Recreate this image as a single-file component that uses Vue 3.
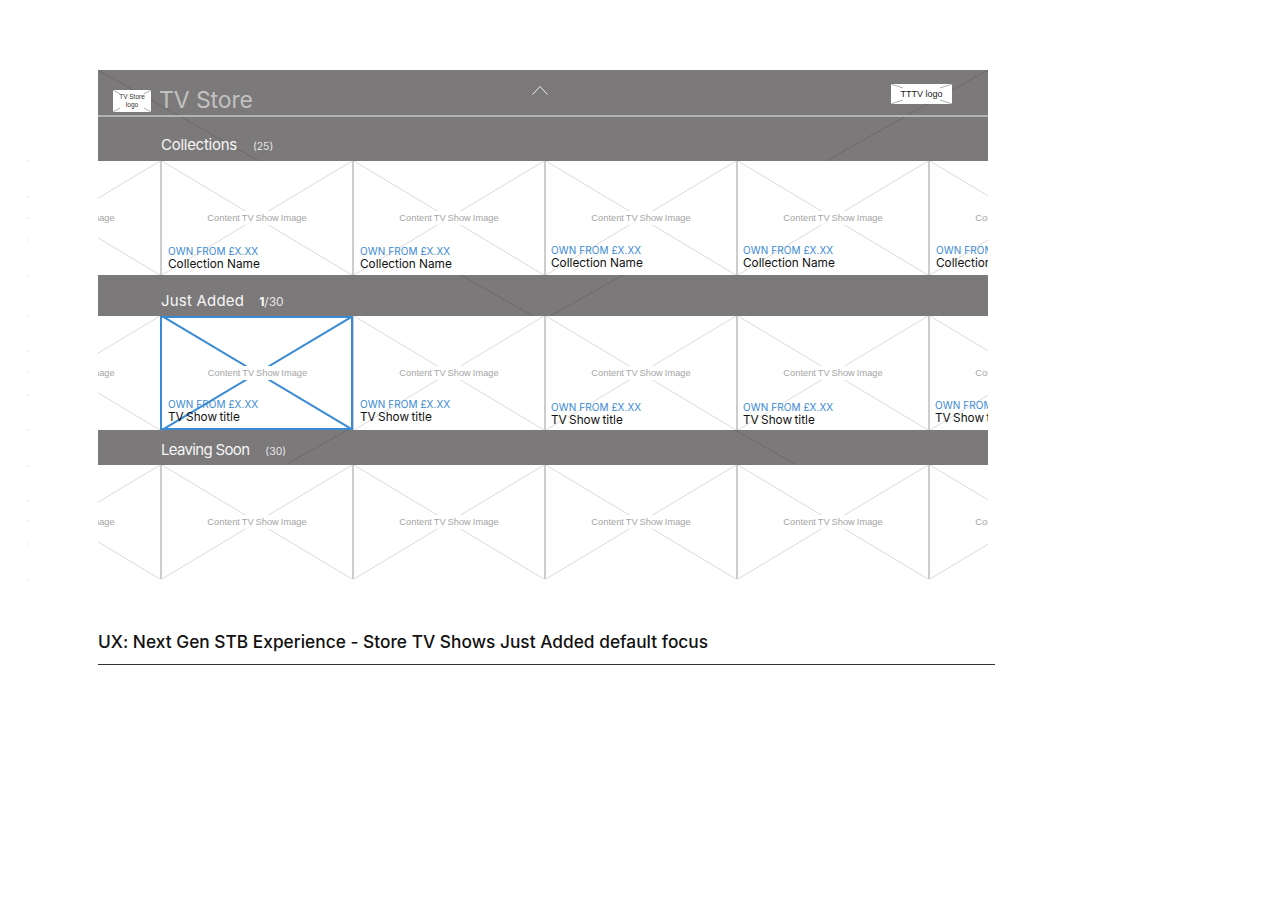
<script setup>
const sections = [
  {
    title: 'Collections',
    count: '(25)',
    bandClass: 'band-collections',
    name: 'Collection Name',
    cards: [{}, { x: 6, y: 5 }, { x: 6, y: 5 }, { x: 5, y: 6 }, { x: 5, y: 6 }, { x: 6, y: 6 }]
  },
  {
    title: 'Just Added',
    count: '/30',
    current: '1',
    bandClass: 'band-added',
    name: 'TV Show title',
    tight: true,
    cards: [{}, { x: 6, y: 7, focused: true }, { x: 6, y: 7 }, { x: 5, y: 4 }, { x: 5, y: 4 }, { x: 5, y: 6 }]
  },
  {
    title: 'Leaving Soon',
    count: '(30)',
    bandClass: 'band-leaving',
    cards: [{}, {}, {}, {}, {}, {}]
  }
]

// faint crop marks down the left edge of the sheet
const marks = [160, 196, 217, 239, 275, 315, 350, 371, 394, 429, 465, 500, 520, 543, 579]
</script>

<template>
  <div class="sheet">
    <span v-for="y in marks" :key="y" class="mark" :style="{ top: y + 'px' }"></span>

    <div class="frame">
      <svg class="frame-cross" viewBox="0 0 890 394" preserveAspectRatio="none">
        <line x1="0" y1="0" x2="697" y2="394" />
        <line x1="890" y1="0" x2="189" y2="394" />
      </svg>

      <header class="top-bar">
        <div class="store-logo">
          <svg class="corner-cross" viewBox="0 0 38 22" preserveAspectRatio="none">
            <path d="M0 0L7 4M38 0L31 4M0 22L7 18M38 22L31 18" />
          </svg>
          <span>TV Store<br />logo</span>
        </div>
        <h1>TV Store</h1>
        <svg class="chevron" viewBox="0 0 16 10">
          <path d="M0.5 9.5L8 1.5L15.5 9.5" />
        </svg>
        <div class="tv-logo">
          <svg class="corner-cross" viewBox="0 0 61 20" preserveAspectRatio="none">
            <path d="M0 0L12 4M61 0L49 4M0 20L12 16M61 20L49 16" />
          </svg>
          <span>TTTV logo</span>
        </div>
      </header>

      <section v-for="section in sections" :key="section.title">
        <div :class="['band', section.bandClass]">
          <h2>{{ section.title }}</h2>
          <span class="count"><b v-if="section.current">{{ section.current }}</b>{{ section.count }}</span>
        </div>
        <div class="row">
          <div
            v-for="(card, i) in section.cards"
            :key="i"
            :class="['card', { focused: card.focused }]"
          >
            <svg class="card-cross" viewBox="0 0 192 114" preserveAspectRatio="none">
              <line x1="0" y1="0" x2="192" y2="114" vector-effect="non-scaling-stroke" />
              <line x1="192" y1="0" x2="0" y2="114" vector-effect="non-scaling-stroke" />
            </svg>
            <span class="placeholder">Content TV Show Image</span>
            <div
              v-if="card.x"
              class="caption"
              :style="{ paddingLeft: card.x + 'px', paddingBottom: card.y + 'px' }"
            >
              <div class="price">OWN FROM £X.XX</div>
              <div :class="['name', { tight: section.tight }]">{{ section.name }}</div>
            </div>
          </div>
        </div>
      </section>
    </div>

    <div class="footer">
      <p>UX: Next Gen STB Experience - Store TV Shows Just Added default focus</p>
    </div>
  </div>
</template>

<style>
html,
body {
  margin: 0;
  background: #fff;
}
</style>

<style scoped>
.sheet {
  position: relative;
  height: 907px;
  padding: 70px 0 0 98px;
  box-sizing: border-box;
  font-family: Inter, "Liberation Sans", sans-serif;
  overflow: hidden;
}

.mark {
  position: absolute;
  left: 28px;
  width: 1px;
  height: 2px;
  background: #e2e2e2;
}

.frame {
  position: relative;
  width: 890px;
  background: #7b797a;
  overflow: hidden;
}

.frame-cross {
  position: absolute;
  left: 0;
  top: 0;
  width: 890px;
  height: 394px;
}

.frame-cross line {
  stroke: #6c6a6b;
  stroke-width: 1;
}

.top-bar {
  position: relative;
  display: flex;
  align-items: flex-start;
  height: 45px;
  border-bottom: 2px solid #b4b3b3;
}

.store-logo {
  position: relative;
  display: flex;
  align-items: center;
  justify-content: center;
  width: 38px;
  height: 22px;
  margin: 20px 0 0 15px;
  background: #fff;
  color: #333;
  font-family: "Liberation Sans", sans-serif;
  font-size: 6.5px;
  line-height: 8px;
  text-align: center;
}

.corner-cross {
  position: absolute;
  inset: 0;
  width: 100%;
  height: 100%;
}

.corner-cross path {
  fill: none;
  stroke: #8a8a8a;
  stroke-width: 0.7;
}

.store-logo span,
.tv-logo span {
  position: relative;
}

.top-bar h1 {
  margin: 17px 0 0 8px;
  color: #c2c1c1;
  font-size: 23px;
  line-height: 27px;
  font-weight: 400;
  letter-spacing: -0.1px;
}

.chevron {
  position: absolute;
  left: 434px;
  top: 15px;
  width: 16px;
  height: 10px;
}

.chevron path {
  fill: none;
  stroke: #eee;
  stroke-width: 1;
}

.tv-logo {
  position: absolute;
  left: 793px;
  top: 14px;
  display: flex;
  align-items: center;
  justify-content: center;
  width: 61px;
  height: 20px;
  background: #fff;
  color: #222;
  font-family: "Liberation Sans", sans-serif;
  font-size: 9px;
}

.band {
  position: relative;
  display: flex;
  align-items: baseline;
  padding-left: 63px;
  color: #f6f6f6;
  box-sizing: border-box;
}

.band h2 {
  margin: 0;
  font-size: 15px;
  line-height: 18px;
  font-weight: 400;
}

.band-collections {
  height: 44px;
  padding-top: 19px;
}

.band-collections h2 {
  letter-spacing: -0.27px;
}

.band-added {
  height: 41px;
  padding-top: 17px;
}

.band-added h2 {
  letter-spacing: 0.2px;
}

.band-leaving {
  height: 35px;
  padding-top: 11px;
}

.band-leaving h2 {
  letter-spacing: -0.67px;
}

.count {
  font-size: 10.5px;
  color: #e6e6e6;
}

.band-collections .count {
  margin-left: 16px;
}

.band-added .count {
  margin-left: 15px;
  font-size: 12px;
}

.band-leaving .count {
  margin-left: 16px;
}

.count b {
  color: #fff;
  font-weight: 700;
}

.row {
  position: relative;
  display: flex;
  height: 114px;
  background: #fff;
  overflow: hidden;
}

.card {
  position: relative;
  flex: 0 0 192px;
  height: 114px;
  border-left: 2px solid #cdcdcd;
  box-sizing: border-box;
  display: flex;
  flex-direction: column;
  justify-content: flex-end;
}

.card:first-child {
  margin-left: -130px;
}

.card-cross {
  position: absolute;
  left: 0;
  top: 0;
  width: 100%;
  height: 100%;
}

.card-cross line {
  stroke: #dadada;
  stroke-width: 1;
}

.placeholder {
  position: absolute;
  left: 0;
  right: 0;
  top: 50px;
  width: max-content;
  margin: 0 auto;
  background: #fff;
  color: #a5a5a5;
  font-family: "Liberation Sans", sans-serif;
  font-size: 9.3px;
  line-height: 14px;
  word-spacing: -0.6px;
}

.caption {
  position: relative;
}

.price {
  color: #3a8ad4;
  font-size: 10px;
  line-height: 13px;
  letter-spacing: 0.08px;
}

.name {
  color: #111;
  font-size: 11.8px;
  line-height: 12px;
}

.name.tight {
  word-spacing: -1px;
}

.card.focused {
  flex-basis: 193px;
  margin-right: -1px;
  outline: 2px solid #3a8ad4;
  outline-offset: -2px;
  border-left-color: #3a8ad4;
  z-index: 1;
}

.card.focused .card-cross line {
  stroke: #3a8ad4;
  stroke-width: 2;
}

.footer {
  width: 897px;
  margin-top: 50px;
  border-bottom: 1px solid #333;
}

.footer p {
  margin: 0;
  height: 35px;
  color: #111;
  font-size: 17.3px;
  line-height: 25px;
  font-weight: 500;
  letter-spacing: 0.02px;
}
</style>
